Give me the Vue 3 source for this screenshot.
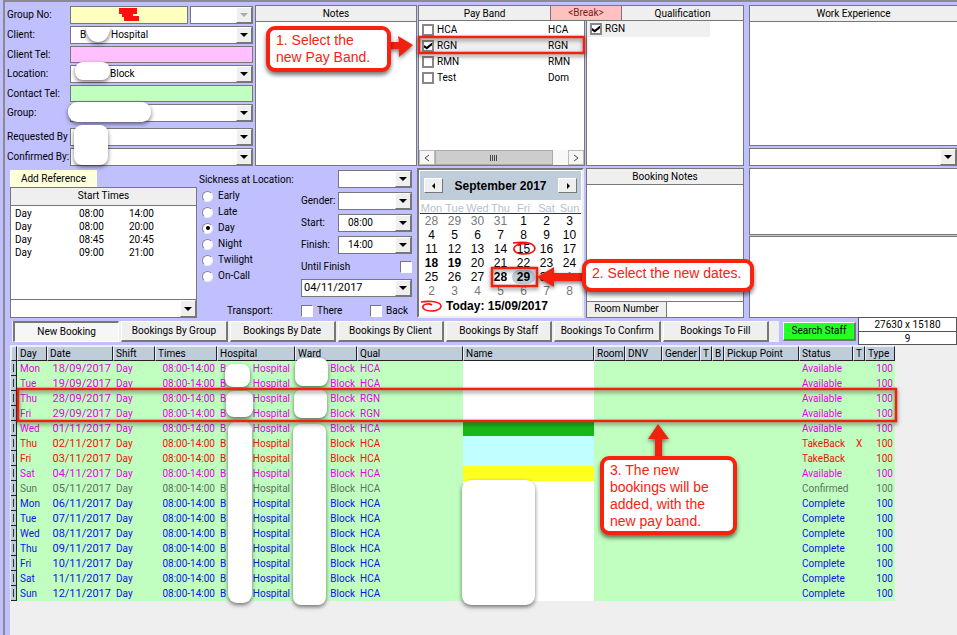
<script setup>
import { ref } from 'vue'

const payBands = ref([
  { name: 'HCA', code: 'HCA', on: false },
  { name: 'RGN', code: 'RGN', on: true },
  { name: 'RMN', code: 'RMN', on: false },
  { name: 'Test', code: 'Dom', on: false }
])
const qualified = ref(true)
const startTimes = [
  ['Day', '08:00', '14:00'],
  ['Day', '08:00', '20:00'],
  ['Day', '08:45', '20:45'],
  ['Day', '09:00', '21:00']
]
const shifts = ['Early', 'Late', 'Day', 'Night', 'Twilight', 'On-Call']
const shift = ref('Day')
const weekdays = ['Mon', 'Tue', 'Wed', 'Thu', 'Fri', 'Sat', 'Sun']
const boldDays = [18, 19, 28, 29]
const days = Array.from({ length: 42 }, (_, i) => {
  const n = i - 3
  const inMonth = n >= 1 && n <= 30
  const label = n < 1 ? n + 31 : n > 30 ? n - 30 : n
  return { label, inMonth, bold: inMonth && boldDays.includes(n), picked: n === 29 }
})
const tabs = [
  'New Booking', 'Bookings By Group', 'Bookings By Date', 'Bookings By Client',
  'Bookings By Staff', 'Bookings To Confirm', 'Bookings To Fill'
]
const tab = ref('New Booking')
const columns = [
  ['', 6], ['Day', 30], ['Date', 66], ['Shift', 42], ['Times', 62], ['Hospital', 78],
  ['Ward', 62], ['Qual', 106], ['Name', 131], ['Room', 31], ['DNV', 37], ['Gender', 38],
  ['T', 12], ['B', 12], ['Pickup Point', 75], ['Status', 54], ['T', 12], ['Type', 30]
]
const bookings = [
  ['Mon', '18/09/2017', 'HCA', 'Available', ''],
  ['Tue', '19/09/2017', 'HCA', 'Available', ''],
  ['Thu', '28/09/2017', 'RGN', 'Available', ''],
  ['Fri', '29/09/2017', 'RGN', 'Available', ''],
  ['Wed', '01/11/2017', 'HCA', 'Available', 'green'],
  ['Thu', '02/11/2017', 'HCA', 'TakeBack', 'cyan', 'X'],
  ['Fri', '03/11/2017', 'HCA', 'TakeBack', 'cyan'],
  ['Sat', '04/11/2017', 'HCA', 'Available', 'yellow'],
  ['Sun', '05/11/2017', 'HCA', 'Confirmed', ''],
  ['Mon', '06/11/2017', 'HCA', 'Complete', ''],
  ['Tue', '07/11/2017', 'HCA', 'Complete', ''],
  ['Wed', '08/11/2017', 'HCA', 'Complete', ''],
  ['Thu', '09/11/2017', 'HCA', 'Complete', ''],
  ['Fri', '10/11/2017', 'HCA', 'Complete', ''],
  ['Sat', '11/11/2017', 'HCA', 'Complete', ''],
  ['Sun', '12/11/2017', 'HCA', 'Complete', '']
]
</script>

<template>
  <main class="app">
    <div class="window">
      <section class="top">
        <form class="client" @submit.prevent>
          <label for="groupno">Group No:</label>
          <div class="pair">
            <input id="groupno" class="field yellow" type="text">
            <span class="combo off"><select aria-label="Group type" disabled><option></option></select><i></i></span>
          </div>
          <label for="client">Client:</label>
          <span class="combo"><select id="client"><option>B&nbsp;&nbsp;&nbsp;&nbsp;&nbsp;&nbsp;&nbsp;&nbsp;&nbsp;&nbsp;Hospital</option></select><i></i></span>
          <label for="ctel">Client Tel:</label>
          <input id="ctel" class="field pink" type="text">
          <label for="location">Location:</label>
          <span class="combo wide"><select id="location"><option>Block</option></select><i></i></span>
          <label for="tel">Contact Tel:</label>
          <input id="tel" class="field mint" type="text">
          <label for="group">Group:</label>
          <span class="combo"><select id="group"><option></option></select><i></i></span>
          <label for="req" class="later">Requested By</label>
          <span class="combo later"><select id="req"><option></option></select><i></i></span>
          <label for="conf">Confirmed By:</label>
          <span class="combo"><select id="conf"><option></option></select><i></i></span>
        </form>

        <div class="panel notes">
          <label class="head" for="notes">Notes</label>
          <textarea id="notes"></textarea>
        </div>

        <div class="bands">
          <div class="band-head">
            <span class="head bordered pay">Pay Band</span>
            <button class="head bordered break" type="button">&lt;Break&gt;</button>
            <span class="head bordered grow">Qualification</span>
          </div>
          <div class="band-body">
            <div class="list pay-list">
              <label v-for="b in payBands" :key="b.name" :class="['item', { chosen: b.on }]">
                <input v-model="b.on" type="checkbox"><span>{{ b.name }}</span><span>{{ b.code }}</span>
              </label>
              <div class="scroll">
                <button type="button" aria-label="Scroll left"><svg viewBox="0 0 8 8"><path d="M6 1 2 4l4 3" /></svg></button>
                <span class="thumb"><svg viewBox="0 0 8 8"><path d="M.5 1v6M2.5 1v6M4.5 1v6M6.5 1v6" /></svg></span>
                <button type="button" aria-label="Scroll right"><svg viewBox="0 0 8 8"><path d="m2 1 4 3-4 3" /></svg></button>
              </div>
            </div>
            <div class="list qual-list">
              <label class="item"><input v-model="qualified" type="checkbox"><span>RGN</span></label>
            </div>
          </div>
        </div>

        <div class="experience">
          <div class="panel">
            <label class="head" for="work">Work Experience</label>
            <textarea id="work"></textarea>
          </div>
          <span class="combo"><select aria-label="Experience"><option></option></select><i></i></span>
        </div>
      </section>

      <section class="middle">
        <div class="reference">
          <button class="addref" type="button">Add Reference</button>
          <div class="panel">
            <div class="head times-head">Start Times</div>
            <table class="times">
              <tbody>
                <tr v-for="(t, i) in startTimes" :key="i"><td v-for="(c, j) in t" :key="j">{{ c }}</td></tr>
              </tbody>
            </table>
          </div>
          <span class="combo"><select aria-label="Start time"><option></option></select><i></i></span>
        </div>

        <div class="shift">
          <div class="shift-cols">
            <fieldset class="radios">
              <legend>Sickness at Location:</legend>
              <label v-for="s in shifts" :key="s"><input v-model="shift" type="radio" name="shift" :value="s">{{ s }}</label>
            </fieldset>
            <div class="hours">
              <span></span>
              <span class="combo"><select aria-label="Sickness at Location"><option></option></select><i></i></span>
              <label for="gender">Gender:</label>
              <span class="combo"><select id="gender"><option></option></select><i></i></span>
              <label for="start">Start:</label>
              <span class="combo"><select id="start"><option>08:00</option></select><i></i></span>
              <label for="finish">Finish:</label>
              <span class="combo"><select id="finish"><option>14:00</option></select><i></i></span>
              <label class="until">Until Finish<input class="sunk" type="checkbox"></label>
              <span class="combo date"><select aria-label="Until date"><option>04/11/2017</option></select><i></i></span>
            </div>
          </div>
          <div class="transport">
            <span>Transport:</span>
            <label><input class="sunk" type="checkbox">There</label>
            <label><input class="sunk" type="checkbox">Back</label>
          </div>
        </div>

        <div class="calendar">
          <div class="month">
            <button type="button" aria-label="Previous month"><svg viewBox="0 0 8 8"><path d="M5 1 2 4l3 3z" /></svg></button>
            <strong>September 2017</strong>
            <button type="button" aria-label="Next month"><svg viewBox="0 0 8 8"><path d="m3 1 3 3-3 3z" /></svg></button>
          </div>
          <div class="week"><span v-for="w in weekdays" :key="w">{{ w }}</span></div>
          <div class="days">
            <span v-for="(d, i) in days" :key="i" :class="{ dim: !d.inMonth, bold: d.bold, picked: d.picked }">{{ d.label }}</span>
          </div>
          <div class="today">
            <svg viewBox="0 0 24 14"><path d="M1 3c6-1 16-1 19 2 3 3-1 7-9 7C6 12 2 10 3 7c1-2 6-3 9-1" /></svg>
            <strong>Today: 15/09/2017</strong>
          </div>
        </div>

        <div class="panel booking-notes">
          <label class="head" for="bnotes">Booking Notes</label>
          <textarea id="bnotes"></textarea>
          <div class="room"><label for="room">Room Number</label><input id="room" type="text"></div>
        </div>

        <div class="extras">
          <textarea aria-label="Extra notes one"></textarea>
          <textarea aria-label="Extra notes two"></textarea>
        </div>
      </section>

      <nav class="actions">
        <div class="tabs">
          <button v-for="t in tabs" :key="t" type="button" :class="{ down: t === tab }" @click="tab = t">{{ t }}</button>
        </div>
        <button class="search" type="button">Search Staff</button>
        <div class="counter"><span>27630 x 15180</span><span>9</span></div>
      </nav>

      <section class="results">
        <table class="grid">
          <colgroup><col v-for="(c, i) in columns" :key="i" :style="{ width: c[1] + 'px' }"></colgroup>
          <thead><tr><th v-for="(c, i) in columns" :key="i">{{ c[0] }}</th></tr></thead>
          <tbody>
            <tr v-for="b in bookings" :key="b[1]" :class="b[3].toLowerCase()">
              <td class="mark"><i></i></td>
              <td>{{ b[0] }}</td>
              <td class="right day">{{ b[1] }}</td>
              <td>Day</td>
              <td class="right">08:00-14:00</td>
              <td><span class="split"><span>B</span><span>Hospital</span></span></td>
              <td class="right">Block</td>
              <td>{{ b[2] }}</td>
              <td :class="['name', b[4]]"></td>
              <td></td><td></td><td></td><td></td><td></td><td></td>
              <td>{{ b[3] }}</td>
              <td>{{ b[5] }}</td>
              <td class="right">100</td>
            </tr>
          </tbody>
        </table>
      </section>
    </div>

    <svg class="marks" width="957" height="635" viewBox="0 0 957 635" aria-hidden="true">
      <g class="masks">
        <path d="M86 27h24c0 9-5 15-12 15s-12-6-12-15z" />
        <rect x="75" y="62" width="35" height="18" rx="8" />
        <rect x="68" y="102" width="83" height="20" rx="9" />
        <rect x="74" y="125" width="34" height="40" rx="8" />
        <rect x="225" y="364" width="25" height="23" rx="8" />
        <rect x="226" y="391" width="27" height="26" rx="8" />
        <rect x="228" y="421" width="24" height="182" rx="9" />
        <rect x="295" y="358" width="33" height="28" rx="8" />
        <rect x="294" y="389" width="33" height="29" rx="8" />
        <rect x="293" y="424" width="33" height="181" rx="8" />
        <rect x="462" y="480" width="73" height="125" rx="9" />
      </g>
      <path class="solid" d="M119 8h18v6h-18zM124 16h15v5h-15z" />
      <path class="solid" d="M122 13h11v4h-11z" />
      <g class="frames">
        <rect x="419" y="37" width="165" height="16" />
        <rect x="492" y="268" width="45" height="18" />
        <rect x="18" y="389" width="878" height="32" />
      </g>
      <path class="scribble" d="M513 243c8-1 18-1 21 3 3 5-3 8-10 8-6 0-11-2-10-6 1-3 6-5 12-4" />
      <g class="arrows">
        <path d="M389 42h10l-1-6 15 9-14 12v-8h-10z" />
        <path d="M585 273h-31v-6l-17 10 17 10v-6h31z" />
        <path d="M655 458v-19h-7l10-15 11 15h-7v19z" />
      </g>
    </svg>
    <aside class="callout one">1. Select the<br>new Pay Band.</aside>
    <aside class="callout two">2. Select the new dates.</aside>
    <aside class="callout three">3. The new<br>bookings will be<br>added, with the<br>new pay band.</aside>
  </main>
</template>

<style>
body { background: #efefef; }
</style>

<style scoped>
.app, .app * { box-sizing: border-box; }
.app {
  position: relative;
  min-height: 100vh;
  display: flex;
  padding-left: 3px;
  overflow: hidden;
  background: #c0c0ff;
  font: 10px/14px Roboto, "Liberation Sans", Arial, sans-serif;
  color: #000;
}
.app button, .app input, .app select, .app textarea { font: inherit; color: inherit; margin: 0; border-radius: 0; }
.window { flex: 1; min-width: 0; display: flex; flex-direction: column; border: solid #8a8a90; border-width: 2px 0 0 2px; }
textarea { display: block; width: 100%; flex: 1; min-height: 0; resize: none; border: 0; padding: 2px; background: #fff; outline: 0; }

.combo { display: grid; grid-template-columns: minmax(0, 1fr) 16px; height: 18px; border: 1px solid #777; background: #fff; }
.combo select { grid-area: 1 / 1 / 2 / 3; appearance: none; border: 0; background: none; width: 100%; padding: 0 18px 0 9px; outline: 0; }
.combo i { grid-area: 1 / 2; pointer-events: none; display: grid; place-items: center; background: #efefef; border: 1px solid; border-color: #fff #777 #777 #fff; }
.combo i::after { content: ""; border: 4px solid transparent; border-top-color: #000; border-bottom: 0; }
.combo.off i::after { border-top-color: #aaa; }

.panel { display: flex; flex-direction: column; border: 1px solid #777; background: #fff; min-height: 0; }
.head { display: block; height: 16px; line-height: 16px; flex: none; text-align: center; background: #efefef; border: 0; border-bottom: 1px solid #777; padding: 0; }
.head.bordered { border: 1px solid #777; border-left-width: 0; }

.top { display: grid; grid-template-columns: 250px 163px 326px minmax(0, 1fr); height: 164px; padding-top: 3px; }
.client { display: grid; grid-template-columns: 63px 183px; align-content: start; align-items: center; row-gap: 2px; padding: 1px 0 0 2px; white-space: nowrap; }
.field { width: 100%; height: 17px; border: 1px solid #777; padding: 0 4px; outline: 0; }
.pair { display: grid; grid-template-columns: 118px 63px; gap: 2px; }
.pair .field { height: 18px; }
.yellow { background: #ffffc0; }
.pink { background: #ffc0ff; }
.mint { background: #c0ffc0; }
.wide select { padding-left: 39px; }
.later { margin-top: 4px; }
.notes { margin-right: 1px; }
.bands { display: flex; flex-direction: column; }
.band-head { display: flex; }
.band-head .pay { width: 133px; border-left-width: 1px; }
.app .band-head .break { width: 71px; background: #ffc0c0; color: #722; }
.grow { flex: 1; }
.band-body { flex: 1; display: grid; grid-template-columns: 167px 1fr; gap: 1px; }
.list { display: flex; flex-direction: column; background: #fff; border: 1px solid #777; border-top: 0; }
.item { display: grid; grid-template-columns: 12px 108px 1fr; column-gap: 3px; align-items: center; height: 16px; padding-left: 3px; }
.pay-list { padding-top: 1px; }
.chosen { background: #efefef; }
.qual-list .item { grid-template-columns: 12px 1fr; margin-right: 33px; background: #f0f0f0; }
.item input, .sunk { appearance: none; width: 12px; height: 12px; border: 2px solid #888; background: #fff; display: grid; place-items: center; }
.item input:checked::after { content: ""; width: 8px; height: 7px; background: #000; clip-path: polygon(0 35%, 35% 60%, 100% 0, 100% 40%, 35% 100%, 0 70%); }
.scroll { margin-top: auto; display: flex; height: 15px; background: #f8f8f8; }
.scroll button { width: 16px; padding: 0; border: 1px solid #bbb; background: #f6f6f6; display: grid; place-items: center; }
.scroll svg { width: 8px; height: 8px; fill: none; stroke: #444; }
.thumb { width: 118px; margin-right: auto; background: #cdcdcd; border: 1px solid #aaa; display: grid; place-items: center; }
.experience { margin-left: 5px; display: flex; flex-direction: column; gap: 2px; }
.experience .panel { flex: 1; border-right: 0; }

.middle { display: grid; grid-template-columns: 187px 220px 169px 158px minmax(0, 1fr); height: 151px; padding: 2px 0 0 5px; }
.reference { display: flex; flex-direction: column; padding-top: 2px; min-height: 0; }
.addref { align-self: start; width: 87px; height: 17px; line-height: 17px; border: 0; padding: 0; background: #ffffdc; flex: none; }
.reference .panel { flex: 1; border-bottom: 0; }
.times-head { height: 18px; }
.times { align-self: start; border-collapse: collapse; margin: 1px 0 0 4px; }
.times td { padding: 0; height: 13px; line-height: 13px; width: 50px; min-width: 50px; }
.times td:first-child { width: 64px; min-width: 64px; }
.reference .combo { height: 19px; flex: none; }

.shift { padding: 2px 5px 0 2px; display: flex; flex-direction: column; }
.shift-cols { display: flex; justify-content: space-between; }
.radios { border: 0; padding: 0; margin: 0; width: 98px; min-width: 0; white-space: nowrap; }
.radios legend { padding: 0; height: 18px; line-height: 20px; }
.radios label { display: flex; align-items: center; gap: 5px; height: 16px; padding-left: 3px; }
.radios input { appearance: none; width: 11px; height: 11px; background: #fff; border: 1px solid; border-color: #888 #eee #eee #888; display: grid; place-items: center; }
.app .radios input { border-radius: 50%; }
.radios input:checked::after { content: ""; width: 4px; height: 4px; border-radius: 50%; background: #000; }
.hours { display: grid; grid-template-columns: 37px 74px; row-gap: 4px; align-items: center; white-space: nowrap; }
.until { grid-column: 1 / 3; display: flex; align-items: center; justify-content: space-between; height: 17px; }
.date { grid-column: 1 / 3; }
.app .date select { padding-left: 2px; font-size: 11px; }
.sunk { flex: none; border: 1px solid; border-color: #777 #fff #fff #777; }
.transport { display: grid; grid-template-columns: 74px 69px auto; padding-left: 28px; margin-top: 7px; align-items: center; white-space: nowrap; }
.transport label { display: flex; align-items: center; gap: 4px; }

.calendar { background: #fff; border: 2px solid; border-color: #777 #eee #eee #777; display: flex; flex-direction: column; margin-right: 2px; padding: 1px; font-size: 12px; font-family: "Liberation Sans", Arial, sans-serif; }
.month { display: flex; align-items: center; justify-content: space-between; height: 29px; flex: none; background: #bfcddb; padding: 0 4px; }
.month strong { font-size: 12px; }
.month button { width: 19px; height: 15px; padding: 0; display: grid; place-items: center; background: #efefef; border: 1px solid; border-color: #fff #777 #777 #fff; }
.month svg { width: 8px; height: 8px; }
.week, .days { display: grid; grid-template-columns: repeat(7, 1fr); text-align: center; }
.week { height: 14px; line-height: 16px; color: #b4c2d0; border-bottom: 1px solid #333; font-size: 11px; }
.days { line-height: 14px; }
.dim { color: #777; }
.bold { font-weight: 700; }
.picked { background: #bfcddb; border-radius: 8px; }
.today { display: flex; align-items: center; gap: 2px; height: 16px; }
.today svg { width: 24px; height: 14px; fill: none; stroke: #ff1010; stroke-width: 1.6; }
.booking-notes { margin: 0; }
.room { display: flex; height: 16px; border-top: 1px solid #777; flex: none; }
.room label { width: 80px; background: #efefef; border-right: 1px solid #777; text-align: center; }
.room input { flex: 1; min-width: 0; border: 0; padding: 0 3px; outline: 0; }
.extras { margin-left: 5px; display: flex; flex-direction: column; gap: 1px; }
.extras textarea { border: 1px solid #777; border-right: 0; flex: 66; }
.extras textarea + textarea { flex: 83; }

.actions { display: flex; align-items: center; height: 28px; padding-left: 7px; }
.tabs { flex: 0 1 767px; display: flex; gap: 2px; background: #efefef; padding: 0 10px 0 1px; height: 21px; }
.tabs button { flex: 1; min-width: 0; padding: 0; white-space: nowrap; background: #efefef; border: solid; border-width: 1px 2px 2px 1px; border-color: #fff #777 #777 #fff; }
.tabs .down { border-width: 2px 1px 1px 2px; border-color: #777 #fff #fff #777; background: #f6f6f6; }
.app .search { width: 73px; height: 19px; margin: 1px 2px 0 4px; padding: 0; background: #24ff24; border: solid; border-width: 1px 2px 2px 1px; border-color: #fff #777 #777 #fff; white-space: nowrap; }
.counter { flex: 1; display: grid; align-self: stretch; grid-template-rows: 1fr 1fr; background: #fff; border: 1px solid #555; text-align: center; line-height: 13px; }
.counter span + span { border-top: 1px solid #555; }

.results { flex: 1; margin-left: 5px; padding: 1px 0 0 1px; background: #efefef; }
.grid { width: 884px; table-layout: fixed; border-collapse: separate; border-spacing: 0; background: #c0ffc0; white-space: nowrap; }
.grid th { height: 15px; padding: 0 0 0 2px; line-height: 13px; font-weight: 400; text-align: left; overflow: hidden; background: #bfcddb; border: 1px solid; border-color: #eef #222 #222 #eef; }
.grid th:first-child { padding: 0; }
.grid td { height: 15px; line-height: 15px; padding: 0 0 0 3px; overflow: hidden; }
.grid .right { text-align: right; padding-right: 2px; padding-left: 0; }
.grid .day { font-size: 11px; }
.grid .mark { padding: 0; background: #bfcddb; border-right: 1px solid #222; border-bottom: 1px solid #222; }
.mark i { display: block; width: 1px; height: 8px; margin: 0 auto; background: #333; }
.grid .name { background: #fff; }
.grid .green { background: #18b818; }
.grid .cyan { background: #c0ffff; }
.grid .yellow { background: #ffff20; }
.split { display: flex; justify-content: space-between; padding-right: 5px; }
.available { color: #e800e8; }
.takeback { color: #f01008; }
.confirmed { color: #607060; }
.complete { color: #1010e8; }

.marks { position: absolute; left: 0; top: 0; pointer-events: none; }
.masks { fill: #fff; filter: drop-shadow(0 2px 2px #0008); }
.solid { fill: #ff1010; }
.frames { fill: none; stroke: #f0220f; stroke-width: 2.5; filter: drop-shadow(0 2px 2px #0008); }
.scribble { fill: none; stroke: #f01010; stroke-width: 1.6; }
.arrows { fill: #f0220f; filter: drop-shadow(0 2px 2px #0008); }
.callout { position: absolute; background: #fff; border: 4px solid #f8220f; border-radius: 9px; color: #f8220f; font-family: "Liberation Sans", Arial, sans-serif; font-size: 14px; line-height: 17px; padding: 2px 6px; box-shadow: 0 3px 4px #0008; white-space: nowrap; }
.one { left: 266px; top: 26px; width: 125px; height: 46px; }
.two { left: 582px; top: 259px; width: 172px; height: 33px; }
.three { left: 600px; top: 456px; width: 137px; height: 79px; }
</style>
